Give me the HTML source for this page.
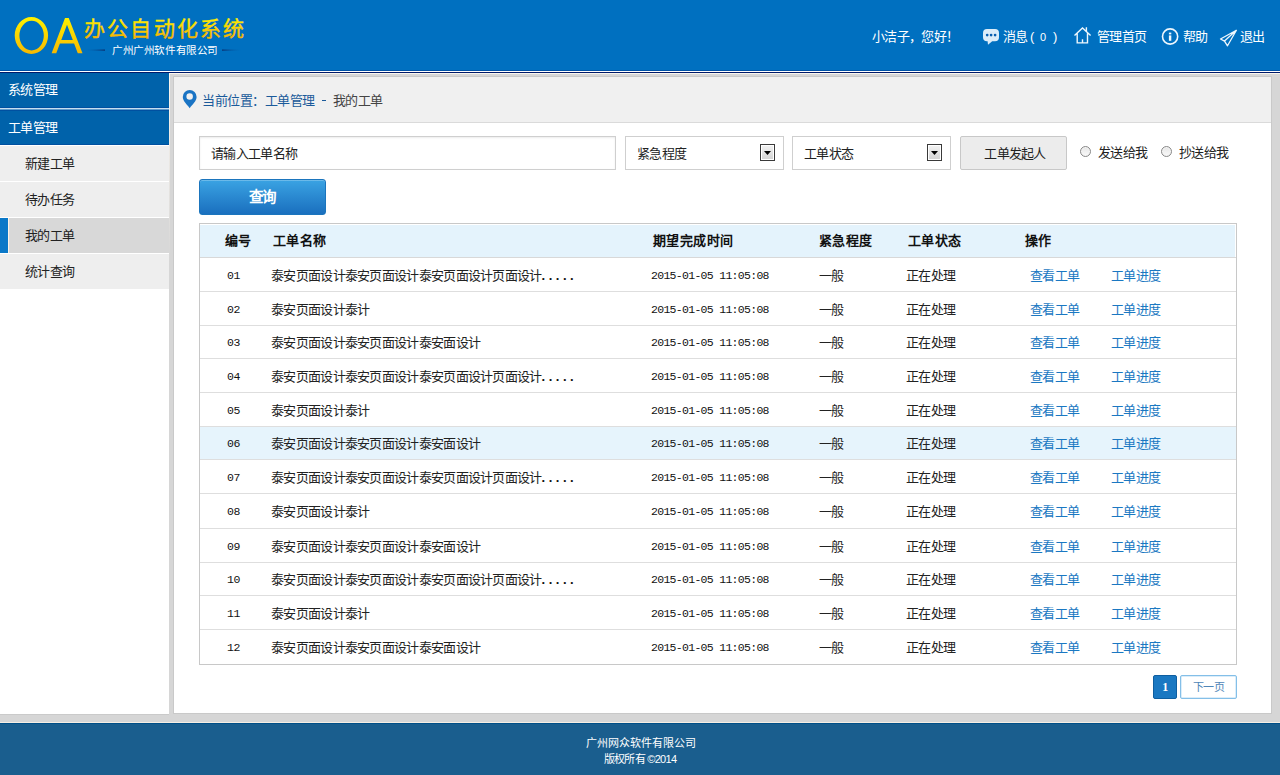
<!DOCTYPE html>
<html lang="zh-CN"><head><meta charset="utf-8">
<style>
*{margin:0;padding:0;box-sizing:border-box}
html,body{width:1280px;height:775px;overflow:hidden;background:#d6d6d6;font-family:"Liberation Sans",sans-serif;font-size:13px;letter-spacing:-0.7px;color:#333;position:relative}
div,span,svg{position:absolute}
.ln{height:1px;left:0;width:1280px}
#hdr{left:0;top:0;width:1280px;height:73px;background:#0070c0}
.htxt{top:29px;height:16px;line-height:16px;color:#fff;white-space:nowrap}
#side{left:0;top:73px;width:169px;height:641px;background:#fff}
.top{left:0;width:169px;background:#0062aa;color:#fff;padding-left:8px;white-space:nowrap}
.sub{left:0;width:169px;height:35px;background:#eee;color:#222;line-height:35px;padding-left:25px;white-space:nowrap}
.sep{left:0;width:169px;height:1px;background:#fff}
#main{left:174px;top:77px;width:1097px;height:636px;background:#fff}
.txt{white-space:nowrap}
.sel{border:1px solid #cfcfcf;background:#fff;height:34px;top:136px}
.sel .t{left:11px;top:1px;line-height:32px;color:#222}
.arr{top:7px;width:15px;height:17px;border:1px solid #3a3a3a;background:linear-gradient(#f4f4f4,#d2d2d2);box-shadow:inset 0 0 0 1px #fff}
.arr:after{content:"";position:absolute;left:3px;top:6px;width:7px;height:4px;background:#000;clip-path:polygon(0 0,100% 0,50% 100%)}
.radio{top:146px;width:11px;height:11px;border-radius:50%;border:1px solid #888;background:linear-gradient(#e6e6e6,#fafafa);box-shadow:inset 0 0 0 1px #f4f4f4}
#tbl{left:199px;top:223px;width:1038px;height:442px;border:1px solid #c8c8c8;background:#fff}
.row{left:200px;width:1036px;color:#222;white-space:nowrap}
.rb{left:200px;width:1036px;height:1px;background:#dedede}
.row span{top:1px}
.c0{left:27px;top:1px!important}.c1{left:71px}.c2{left:451px;top:1px!important;color:#111;font-family:"Liberation Mono",monospace;font-size:11.5px;letter-spacing:-0.7px}
.c3{left:619px}.c4{left:706px}.c5{left:830px;color:#1a78c2}.c6{left:911px;color:#1a78c2}
.c0{font-family:"Liberation Mono",monospace;font-size:11.5px;letter-spacing:-0.5px;color:#111}
.dots{position:static;letter-spacing:3.5px;font-weight:bold;color:#111}
#thead{left:200px;top:225px;width:1035px;height:32px;background:#e4f3fc;line-height:31px;font-weight:bold;font-size:13px;letter-spacing:0.4px;color:#111}
#foot{left:0;top:724px;width:1280px;height:51px;background:#1a5e8e;color:#fff;font-size:11px}
</style></head><body>
<div id="hdr">
  <div class="ln" style="top:70px;background:#0052a6"></div>
  <div class="ln" style="top:71px;background:#fff"></div>
  <div class="ln" style="top:72px;background:#001a6a"></div>
  <svg style="left:0;top:0" width="260" height="70" viewBox="0 0 260 70">
    <defs>
      <linearGradient id="yg" x1="0" y1="0" x2="0" y2="1">
        <stop offset="0" stop-color="#fff200"/>
        <stop offset="1" stop-color="#f6b800"/>
      </linearGradient>
      <linearGradient id="ll" x1="0" y1="0" x2="1" y2="0">
        <stop offset="0" stop-color="#0070c0" stop-opacity="0"/>
        <stop offset="1" stop-color="#0a2a6a"/>
      </linearGradient>
      <linearGradient id="lr" x1="0" y1="0" x2="1" y2="0">
        <stop offset="0" stop-color="#0a2a6a"/>
        <stop offset="1" stop-color="#0070c0" stop-opacity="0"/>
      </linearGradient>
    </defs>
    <path fill="url(#yg)" fill-rule="evenodd" d="M14.7,35.45 A16.7,18.45 0 1 0 48.1,35.45 A16.7,18.45 0 1 0 14.7,35.45 Z M19.4,35.6 A12.2,14.8 0 1 1 43.8,35.6 A12.2,14.8 0 1 1 19.4,35.6 Z"/>
    <path fill="url(#yg)" fill-rule="evenodd" d="M51.6,53.3 L65,17.9 L68.75,17.9 L82.5,53.3 L77.8,53.3 L74.1,43.6 L59.9,43.6 L56.25,53.3 Z M61.25,40.1 L67,24.8 L72.8,40.1 Z"/>
    <rect x="84" y="49.5" width="21" height="1.2" fill="url(#ll)"/>
    <rect x="222" y="49.5" width="21" height="1.2" fill="url(#lr)"/>
  </svg>
  <svg style="left:0;top:0" width="260" height="50"><defs><linearGradient id="yg2" gradientUnits="userSpaceOnUse" x1="0" y1="18" x2="0" y2="39"><stop offset="0" stop-color="#fff200"/><stop offset="1" stop-color="#f5b000"/></linearGradient></defs><text x="84" y="36" font-family="Liberation Sans" font-size="21" letter-spacing="2.2" fill="url(#yg2)" stroke="url(#yg2)" stroke-width="0.4">办公自动化系统</text></svg>
  <div class="txt" style="left:112px;top:44px;font-size:10.6px;letter-spacing:-0.4px;line-height:12px;color:#fff">广州广州软件有限公司</div>

  <div class="htxt" style="left:872px">小洁子，您好！</div>
  <svg style="left:982px;top:28px" width="18" height="18" viewBox="982 28 18 18">
    <path fill="#dcedf9" d="M987,29 L995,29 Q999,29 999,33 L999,37.2 Q999,41.2 995,41.2 L992.2,41.2 L988,44.8 L987.6,41.2 L987,41.2 Q983,41.2 983,37.2 L983,33 Q983,29 987,29 Z"/>
    <circle cx="987.2" cy="35.1" r="1.35" fill="#0a5fb0"/>
    <circle cx="991.1" cy="35.1" r="1.35" fill="#0a5fb0"/>
    <circle cx="995.1" cy="35.1" r="1.35" fill="#0a5fb0"/>
  </svg>
  <div class="htxt" style="left:1003px">消息</div><div class="htxt" style="left:1030px">(</div><div class="htxt" style="left:1040px;font-size:11px">0</div><div class="htxt" style="left:1053px">)</div>
  <svg style="left:1072px;top:25px" width="22" height="20" viewBox="1072 25 22 20">
    <path fill="none" stroke="#eef7fd" stroke-width="1.4" stroke-linejoin="miter" d="M1074.5,35.5 L1082.5,27.9 L1090.6,35.5 M1077.2,33.2 L1077.2,42.9 L1087.5,42.9 L1087.5,33.2 M1086.4,31.4 L1086.4,27.3 M1082.5,43 L1082.5,39.3"/>
  </svg>
  <div class="htxt" style="left:1097px">管理首页</div>
  <svg style="left:1160px;top:26px" width="21" height="21" viewBox="1160 26 21 21">
    <circle cx="1170.1" cy="36.5" r="7.6" fill="none" stroke="#eef7fd" stroke-width="1.6"/>
    <rect x="1168.9" y="32.6" width="2.4" height="1.8" fill="#eef7fd"/>
    <rect x="1168.9" y="35.4" width="2.4" height="5.4" fill="#eef7fd"/>
  </svg>
  <div class="htxt" style="left:1183px">帮助</div>
  <svg style="left:1218px;top:28px" width="21" height="20" viewBox="1218 28 21 20">
    <path fill="none" stroke="#eef7fd" stroke-width="1.3" stroke-linejoin="round" d="M1236.4,30.3 L1220.5,39 L1224.5,41.1 L1227.5,45.8 Z M1224.5,41.1 L1236.4,30.3"/>
  </svg>
  <div class="htxt" style="left:1240px">退出</div>
</div>

<div class="ln" style="top:73px;left:169px;width:1111px;background:#fbf6ee"></div>
<div style="left:169px;top:73px;width:1px;height:640px;background:linear-gradient(#fbf6ee,#d6d6d6 30%)"></div>
<div style="left:173px;top:76px;width:1099px;height:638px;border:1px solid #c9c9c9"></div>
<div class="ln" style="top:714px;width:169px;background:#cacaca"></div>

<div id="side">
  <div class="top" style="top:0;height:34px;line-height:34px">系统管理</div>
  <div class="sep" style="top:34px;background:#0050a0"></div>
  <div class="sep" style="top:35px;background:#c6def0"></div>
  <div class="sep" style="top:36px;background:#5e9bcc"></div>
  <div class="top" style="top:37px;height:34px;line-height:33px;border-top:1px solid #0050a0">工单管理</div>
  <div class="sep" style="top:71px;background:#0050a0"></div>
  <div class="sep" style="top:72px;background:#fff"></div>
  <div class="sub" style="top:73px">新建工单</div>
  <div class="sep" style="top:108px"></div>
  <div class="sub" style="top:109px">待办任务</div>
  <div class="sep" style="top:144px"></div>
  <div class="sub" style="top:145px;background:#d8d8d8">我的工单</div>
  <div style="left:0;top:145px;width:8px;height:35px;background:#0a78c8"></div>
  <div style="left:8px;top:145px;width:1px;height:35px;background:#fbf3e6"></div>
  <div class="sep" style="top:180px"></div>
  <div class="sub" style="top:181px">统计查询</div>
  <div class="sep" style="top:216px"></div>
</div>

<div id="main">
  <div style="left:0;top:0;width:1097px;height:45px;background:#f0f0f0"></div>
  <div style="left:0;top:45px;width:1097px;height:1px;background:#dadada"></div>
</div>

<svg style="left:180px;top:88px" width="20" height="22" viewBox="180 88 20 22">
  <path fill="#1a74c4" fill-rule="evenodd" d="M182.8,97 A6.9,6.9 0 1 1 196.6,97 C196.6,101.2 192.2,104.6 189.7,108.2 C187.2,104.6 182.8,101.2 182.8,97 Z M186.4,96.5 A3.25,3.25 0 1 0 192.9,96.5 A3.25,3.25 0 1 0 186.4,96.5 Z"/>
</svg>
<div class="txt" style="left:202px;top:93px;line-height:16px;letter-spacing:-0.5px;color:#1a5a9a">当前位置：工单管理</div>
<div style="left:322px;top:100px;width:4px;height:1px;background:#1a5a9a"></div>
<div class="txt" style="left:333px;top:93px;line-height:16px;color:#444">我的工单</div>

<!-- search form -->
<div style="left:199px;top:136px;width:417px;height:34px;border:1px solid #cfcfcf;background:#fff;box-shadow:inset 0 1px 2px rgba(0,0,0,0.08)"></div>
<div class="txt" style="left:211px;top:146px;line-height:16px;color:#222">请输入工单名称</div>

<div class="sel" style="left:625px;width:159px"><div class="t">紧急程度</div><div class="arr" style="left:134px"></div></div>
<div class="sel" style="left:792px;width:159px"><div class="t">工单状态</div><div class="arr" style="left:134px"></div></div>

<div style="left:960px;top:136px;width:107px;height:34px;border:1px solid #c8c8c8;border-radius:2px;background:#ececec;line-height:34px;text-align:center;color:#222;padding-left:3px">工单发起人</div>
<div class="radio" style="left:1080px"></div>
<div class="txt" style="left:1098px;top:145px;line-height:16px;color:#222">发送给我</div>
<div class="radio" style="left:1161px"></div>
<div class="txt" style="left:1179px;top:145px;line-height:16px;color:#222">抄送给我</div>

<div style="left:199px;top:179px;width:127px;height:36px;border:1px solid #1b75bd;border-radius:3px;background:linear-gradient(#3aa3e3,#1a6fbe);box-shadow:inset 0 1px 0 rgba(255,255,255,0.25)"></div>
<div class="txt" style="left:199px;top:187px;width:127px;text-align:center;line-height:20px;color:#fff;font-size:14.5px;font-weight:bold;padding-right:1px">查询</div>

<!-- table -->
<div id="tbl"></div>
<div id="thead">
  <span style="left:25px">编号</span>
  <span style="left:73px">工单名称</span>
  <span style="left:453px">期望完成时间</span>
  <span style="left:619px">紧急程度</span>
  <span style="left:708px">工单状态</span>
  <span style="left:825px">操作</span>
</div>
<div class="rb" style="top:257px;background:#d8d8d8"></div>
<div class='row' style='top:258px;height:33px;line-height:33px;'><span class='c0'>01</span><span class='c1'>泰安页面设计泰安页面设计泰安页面设计页面设计<span class='dots'>.....</span></span><span class='c2'>2015-01-05 11:05:08</span><span class='c3'>一般</span><span class='c4'>正在处理</span><span class='c5'>查看工单</span><span class='c6'>工单进度</span></div><div class='rb' style='top:291px'></div>
<div class='row' style='top:292px;height:33px;line-height:33px;'><span class='c0'>02</span><span class='c1'>泰安页面设计泰计</span><span class='c2'>2015-01-05 11:05:08</span><span class='c3'>一般</span><span class='c4'>正在处理</span><span class='c5'>查看工单</span><span class='c6'>工单进度</span></div><div class='rb' style='top:325px'></div>
<div class='row' style='top:326px;height:32px;line-height:32px;'><span class='c0'>03</span><span class='c1'>泰安页面设计泰安页面设计泰安面设计</span><span class='c2'>2015-01-05 11:05:08</span><span class='c3'>一般</span><span class='c4'>正在处理</span><span class='c5'>查看工单</span><span class='c6'>工单进度</span></div><div class='rb' style='top:358px'></div>
<div class='row' style='top:359px;height:33px;line-height:33px;'><span class='c0'>04</span><span class='c1'>泰安页面设计泰安页面设计泰安页面设计页面设计<span class='dots'>.....</span></span><span class='c2'>2015-01-05 11:05:08</span><span class='c3'>一般</span><span class='c4'>正在处理</span><span class='c5'>查看工单</span><span class='c6'>工单进度</span></div><div class='rb' style='top:392px'></div>
<div class='row' style='top:393px;height:33px;line-height:33px;'><span class='c0'>05</span><span class='c1'>泰安页面设计泰计</span><span class='c2'>2015-01-05 11:05:08</span><span class='c3'>一般</span><span class='c4'>正在处理</span><span class='c5'>查看工单</span><span class='c6'>工单进度</span></div><div class='rb' style='top:426px'></div>
<div class='row' style='top:427px;height:32px;line-height:32px;background:#e6f4fc;'><span class='c0'>06</span><span class='c1'>泰安页面设计泰安页面设计泰安面设计</span><span class='c2'>2015-01-05 11:05:08</span><span class='c3'>一般</span><span class='c4'>正在处理</span><span class='c5'>查看工单</span><span class='c6'>工单进度</span></div><div class='rb' style='top:459px'></div>
<div class='row' style='top:460px;height:33px;line-height:33px;'><span class='c0'>07</span><span class='c1'>泰安页面设计泰安页面设计泰安页面设计页面设计<span class='dots'>.....</span></span><span class='c2'>2015-01-05 11:05:08</span><span class='c3'>一般</span><span class='c4'>正在处理</span><span class='c5'>查看工单</span><span class='c6'>工单进度</span></div><div class='rb' style='top:493px'></div>
<div class='row' style='top:494px;height:34px;line-height:34px;'><span class='c0'>08</span><span class='c1'>泰安页面设计泰计</span><span class='c2'>2015-01-05 11:05:08</span><span class='c3'>一般</span><span class='c4'>正在处理</span><span class='c5'>查看工单</span><span class='c6'>工单进度</span></div><div class='rb' style='top:528px'></div>
<div class='row' style='top:529px;height:33px;line-height:33px;'><span class='c0'>09</span><span class='c1'>泰安页面设计泰安页面设计泰安面设计</span><span class='c2'>2015-01-05 11:05:08</span><span class='c3'>一般</span><span class='c4'>正在处理</span><span class='c5'>查看工单</span><span class='c6'>工单进度</span></div><div class='rb' style='top:562px'></div>
<div class='row' style='top:563px;height:32px;line-height:32px;'><span class='c0'>10</span><span class='c1'>泰安页面设计泰安页面设计泰安页面设计页面设计<span class='dots'>.....</span></span><span class='c2'>2015-01-05 11:05:08</span><span class='c3'>一般</span><span class='c4'>正在处理</span><span class='c5'>查看工单</span><span class='c6'>工单进度</span></div><div class='rb' style='top:595px'></div>
<div class='row' style='top:596px;height:33px;line-height:33px;'><span class='c0'>11</span><span class='c1'>泰安页面设计泰计</span><span class='c2'>2015-01-05 11:05:08</span><span class='c3'>一般</span><span class='c4'>正在处理</span><span class='c5'>查看工单</span><span class='c6'>工单进度</span></div><div class='rb' style='top:629px'></div>
<div class='row' style='top:630px;height:34px;line-height:34px;'><span class='c0'>12</span><span class='c1'>泰安页面设计泰安页面设计泰安面设计</span><span class='c2'>2015-01-05 11:05:08</span><span class='c3'>一般</span><span class='c4'>正在处理</span><span class='c5'>查看工单</span><span class='c6'>工单进度</span></div>

<!-- pagination -->
<div style="left:1153px;top:675px;width:24px;height:24px;border:1px solid #0e5ea0;border-radius:2px;background:#1a78c2;color:#fff;font-family:'Liberation Serif',serif;font-weight:bold;font-size:12px;line-height:22px;text-align:center">1</div>
<div style="left:1180px;top:675px;width:57px;height:24px;border:1px solid #84bfe8;box-shadow:inset 0 0 0 0.5px #b8dcf4;border-radius:2px;background:#fff;color:#4f86b8;font-size:11px;line-height:22px;text-align:center">下一页</div>


<div class="ln" style="top:722px;background:#f6eee4"></div>
<div class="ln" style="top:723px;background:#004f88"></div>
<div id="foot">
  <div class="txt" style="left:1px;width:1280px;top:11px;line-height:16px;text-align:center;letter-spacing:-0.1px">广州网众软件有限公司</div>
  <div class="txt" style="left:0;width:1280px;top:27px;line-height:16px;text-align:center">版权所有 &copy;2014</div>
</div>
</body></html>
